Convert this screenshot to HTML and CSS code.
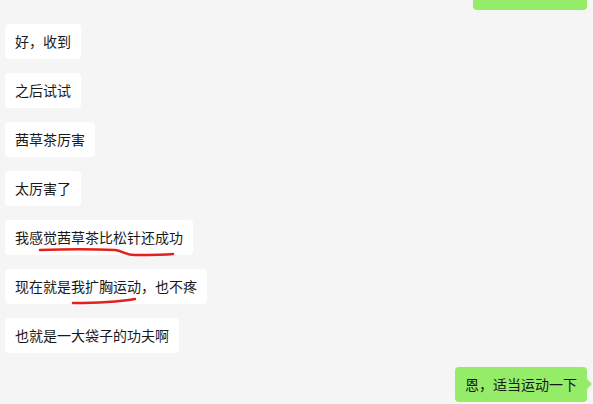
FILE: index.html
```html
<!DOCTYPE html>
<html lang="zh-CN">
<head>
    <meta charset="UTF-8">
    <title>聊天</title>
    <link rel="stylesheet" href="styles.css">
</head>
<body>
    <div class="chat">
        <!-- previous message, scrolled mostly out of view -->
        <div class="msg mine first"><div class="bubble"></div></div>

        <div class="msg"><div class="bubble">好，收到</div></div>
        <div class="msg"><div class="bubble">之后试试</div></div>
        <div class="msg"><div class="bubble">茜草茶厉害</div></div>
        <div class="msg"><div class="bubble">太厉害了</div></div>
        <div class="msg">
            <div class="bubble marked">我感觉茜草茶比松针还成功
                <!-- hand drawn underline -->
                <svg class="scribble one" width="180" height="12" viewBox="0 0 180 12">
                    <path d="M35 3 C60 2 90 2 110 3 C118 4 120 8 130 8 C145 8 158 8 168 7" />
                </svg>
            </div>
        </div>
        <div class="msg">
            <div class="bubble marked">现在就是我扩胸运动，也不疼
                <svg class="scribble two" width="140" height="12" viewBox="0 0 140 12">
                    <path d="M68 7 C90 7 112 6 130 3" />
                </svg>
            </div>
        </div>
        <div class="msg"><div class="bubble">也就是一大袋子的功夫啊</div></div>

        <div class="msg mine"><div class="bubble tail">恩，适当运动一下</div></div>
    </div>
</body>
</html>
```

FILE: styles.css
```css
/* Chat window */
body {
    margin: 0;
    background-color: #f5f5f5;
    font-family: "Noto Sans CJK SC", "Microsoft YaHei", sans-serif;
    overflow: hidden;
}
.chat {
    display: flex;
    flex-direction: column;
    gap: 14px;
    padding: 0 6px 0 5px;
}
.msg {
    display: flex;
}
.msg.mine {
    justify-content: flex-end;
}
.msg.first {
    margin-top: -25px;
}
.bubble {
    position: relative;
    padding: 8px 10px;
    font-size: 14px;
    line-height: 19px;
    color: #191919;
    background-color: #ffffff;
    border-radius: 4px;
}
.mine .bubble {
    background-color: #95ec69;
}
.msg.first .bubble {
    width: 94px;
    height: 19px;
}
.tail::after {
    content: "";
    position: absolute;
    right: -5px;
    top: 12px;
    border-top: 5px solid transparent;
    border-bottom: 5px solid transparent;
    border-left: 5px solid #95ec69;
}
.scribble {
    position: absolute;
    left: 0;
    top: 27px;
    overflow: visible;
}
.scribble path {
    fill: none;
    stroke: #e3201b;
    stroke-width: 2.5;
    stroke-linecap: round;
}
```
